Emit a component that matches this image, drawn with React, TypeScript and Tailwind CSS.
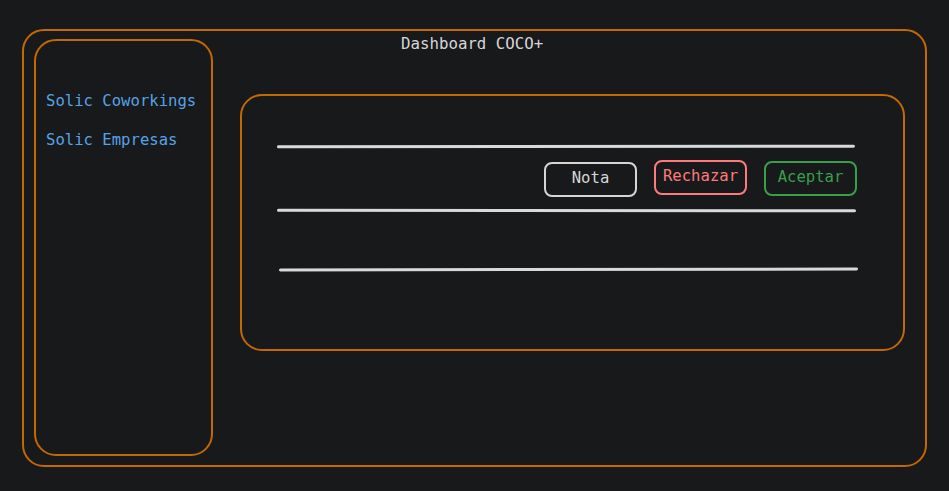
import type { ReactNode } from 'react'

const mono = { fontFamily: '"DejaVu Sans Mono", "Liberation Mono", monospace' }

function SketchButton({ children, className }: { children: ReactNode; className: string }) {
  return (
    <button
      className={`flex h-[35px] w-[93px] items-center justify-center rounded-[8px] border-2 pb-[2px] text-[15.6px] ${className}`}
    >
      {children}
    </button>
  )
}

export default function App() {
  return (
    <div className="h-[491px] w-[949px] overflow-hidden bg-[#18191b] pl-[22px] pt-[29px]" style={mono}>
      {/* Outer frame */}
      <div className="flex h-[438px] w-[905px] gap-0 rounded-[22px] border-2 border-[#c46800] pb-[9px] pl-[10px] pt-[8px]">
        {/* Sidebar */}
        <aside className="flex h-[417px] w-[179px] shrink-0 flex-col gap-[19px] rounded-[22px] border-2 border-[#c46800] pl-[10px] pt-[50px] text-[15.6px] leading-[20px] text-[#56a3e6]">
          <span>Solic Coworkings</span>
          <span>Solic Empresas</span>
        </aside>

        {/* Main */}
        <main className="flex flex-1 flex-col pl-[27px]">
          <h1 className="ml-[161px] text-[15.75px] leading-[10px] text-[#d6d6d6]">Dashboard COCO+</h1>

          <section className="mt-[45px] h-[257px] w-[665px] rounded-[22px] border-2 border-[#c46800] pl-[35px] pt-[49px]">
            <div className="flex w-[580px] flex-col">
              <div className="h-[3px] w-[578px] rotate-[-0.05deg] rounded-full bg-[#d9d9d9]" />
              <div className="mt-[12px] flex items-start justify-end gap-[17px]">
                <SketchButton className="mt-[2px] border-[#d6d6d6] text-[#d6d6d6]">Nota</SketchButton>
                <SketchButton className="border-[#ff7b7b] text-[#ff7b7b]">Rechazar</SketchButton>
                <SketchButton className="mt-[1px] border-[#3a9f4b] text-[#3a9f4b]">Aceptar</SketchButton>
              </div>
              <div className="mt-[12px] h-[3px] w-[579px] rotate-[0.05deg] rounded-full bg-[#d9d9d9]" />
              <div className="ml-[2px] mt-[56px] h-[3px] w-[579px] rotate-[-0.1deg] rounded-full bg-[#d9d9d9]" />
            </div>
          </section>
        </main>
      </div>
    </div>
  )
}
